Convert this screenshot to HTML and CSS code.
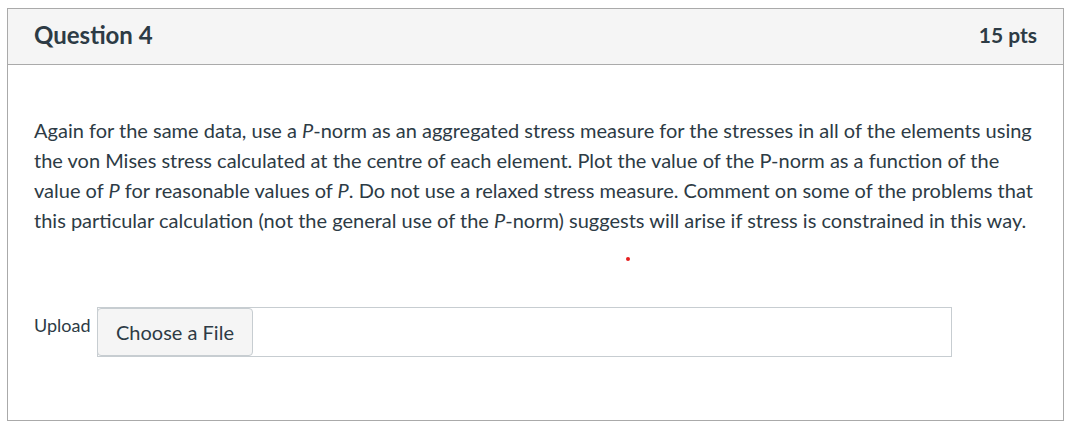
FILE: index.html
```html
<!DOCTYPE html>
<html>
<head>
<meta charset="utf-8">
<link rel="stylesheet" href="styles.css">
</head>
<body>
<div class="question">
  <div class="header">
    <span class="name">Question 4</span>
    <span class="pts">15 pts</span>
  </div>
  <div class="content">
    <p class="text">Again for the same data, use a <i>P</i>-norm as an aggregated stress measure for the stresses in all of the elements using the von Mises stress calculated at the centre of each element. Plot the value of the P-norm as a function of the value of <i>P</i> for reasonable values of <i>P</i>. Do not use a relaxed stress measure. Comment on some of the problems that this particular calculation (not the general use of the <i>P</i>-norm) suggests will arise if stress is constrained in this way.</p>
    <span class="dot"></span>
    <div class="upload">
      <span class="label">Upload</span>
      <div class="filebox"><span class="btn">Choose a File</span></div>
    </div>
  </div>
</div>
</body>
</html>
```

FILE: styles.css
```css
html, body { margin: 0; padding: 0; background: #fff; }
body { padding: 8px 7px 0 7px; font-family: Lato, "Open Sans", sans-serif; color: #2d3b45; }
.question { border: 1px solid #aaaaaa; width: 1057px; height: 413px; box-sizing: border-box; }
.header { display: flex; justify-content: space-between; align-items: center; height: 56px; padding: 0 26px 4px 26px; background: #f5f5f5; border-bottom: 1px solid #aaaaaa; box-sizing: border-box; }
.name { font-weight: 700; font-size: 24px; }
.pts { font-weight: 700; font-size: 21px; color: #2d3b45; }
.content { position: relative; padding: 50px 26px 0 26px; }
.text { margin: 0; font-size: 20px; line-height: 30px; color: #2d3b45; }
.dot { position: absolute; left: 618px; top: 192px; width: 4px; height: 4px; border-radius: 50%; background: #e61e1e; }
.upload { display: flex; align-items: flex-start; margin-top: 72px; }
.label { font-size: 18px; padding-top: 7px; width: 63px; }
.filebox { width: 855px; height: 50px; border: 1px solid #c7cdd1; box-sizing: border-box; display: flex; align-items: flex-start; }
.btn { display: inline-flex; align-items: center; height: 48px; box-sizing: border-box; padding: 0 18px 1px 18px; background: #f5f5f5; border: 1px solid #c7cdd1; border-radius: 4px; font-size: 20px; color: #2d3b45; margin-left: -1px; }
```
